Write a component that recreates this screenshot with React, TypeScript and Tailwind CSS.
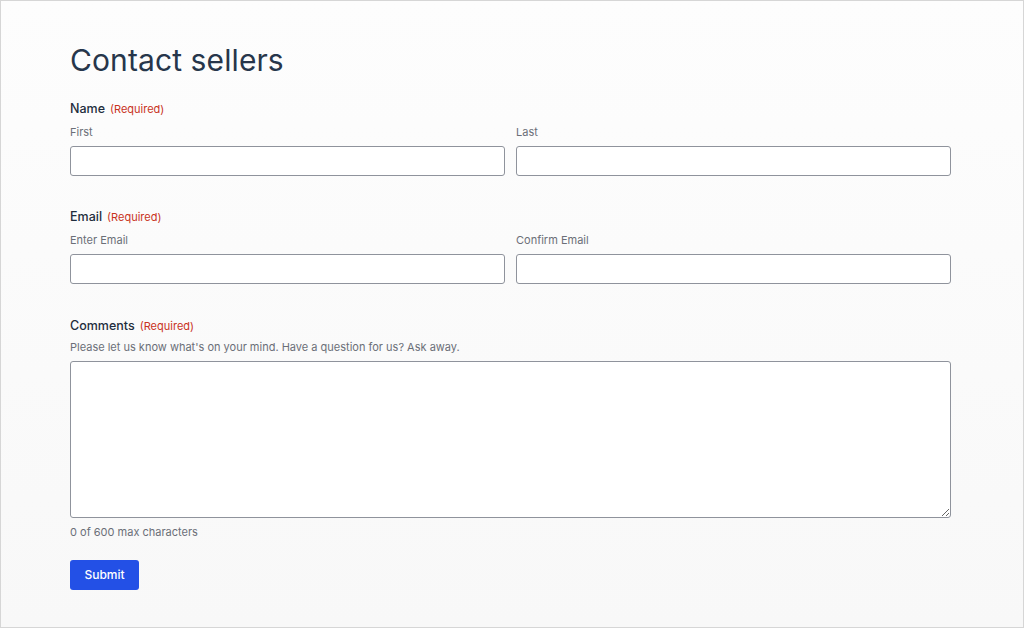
const font = { fontFamily: "Inter, 'Noto Sans', sans-serif" };

const Label = ({ title }: { title: string }) => (
  <div className="flex items-baseline gap-[5px] h-[18px]">
    <span className="text-[12.5px] font-medium text-[#1f2d3d]">{title}</span>
    <span className="text-[11px] text-[#c9331d]">(Required)</span>
  </div>
);

const Field = ({ label }: { label: string }) => (
  <div className="flex flex-col">
    <span className="text-[11px] text-[#6b6f78] h-[16px] leading-[16px]">{label}</span>
    <input className="mt-[6px] h-[30px] w-full rounded-[3px] border border-[#8f939c] bg-white" />
  </div>
);

export default function App() {
  return (
    <div
      className="h-[628px] w-[1024px] border border-[#d6d6d6] bg-gradient-to-b from-[#fdfdfd] to-[#f8f8f8] text-[#1f2d3d]"
      style={font}
    >
      <div className="w-[881px] ml-[69px] pt-[39px]">
        <h1 className="text-[30px] leading-[40px] font-normal text-[#27364b] tracking-[0.1px]">Contact sellers</h1>

        <div className="mt-[20px]">
          <Label title="Name" />
          <div className="mt-[6px] grid grid-cols-2 gap-[11px]">
            <Field label="First" />
            <Field label="Last" />
          </div>
        </div>

        <div className="mt-[32px]">
          <Label title="Email" />
          <div className="mt-[6px] grid grid-cols-2 gap-[11px]">
            <Field label="Enter Email" />
            <Field label="Confirm Email" />
          </div>
        </div>

        <div className="mt-[33px]">
          <Label title="Comments" />
          <p className="mt-[4px] text-[11px] leading-[16px] text-[#6b6f78]">
            Please let us know what's on your mind. Have a question for us? Ask away.
          </p>
          <textarea className="mt-[6px] block h-[157px] w-full rounded-[3px] border border-[#8f939c] bg-white" />
          <p className="mt-[6px] text-[11px] leading-[16px] text-[#6b6f78]">0 of 600 max characters</p>
        </div>

        <button className="mt-[20px] h-[30px] w-[69px] rounded-[3px] bg-[#2350e6] text-[12px] font-medium text-white">
          Submit
        </button>
      </div>
    </div>
  );
}
